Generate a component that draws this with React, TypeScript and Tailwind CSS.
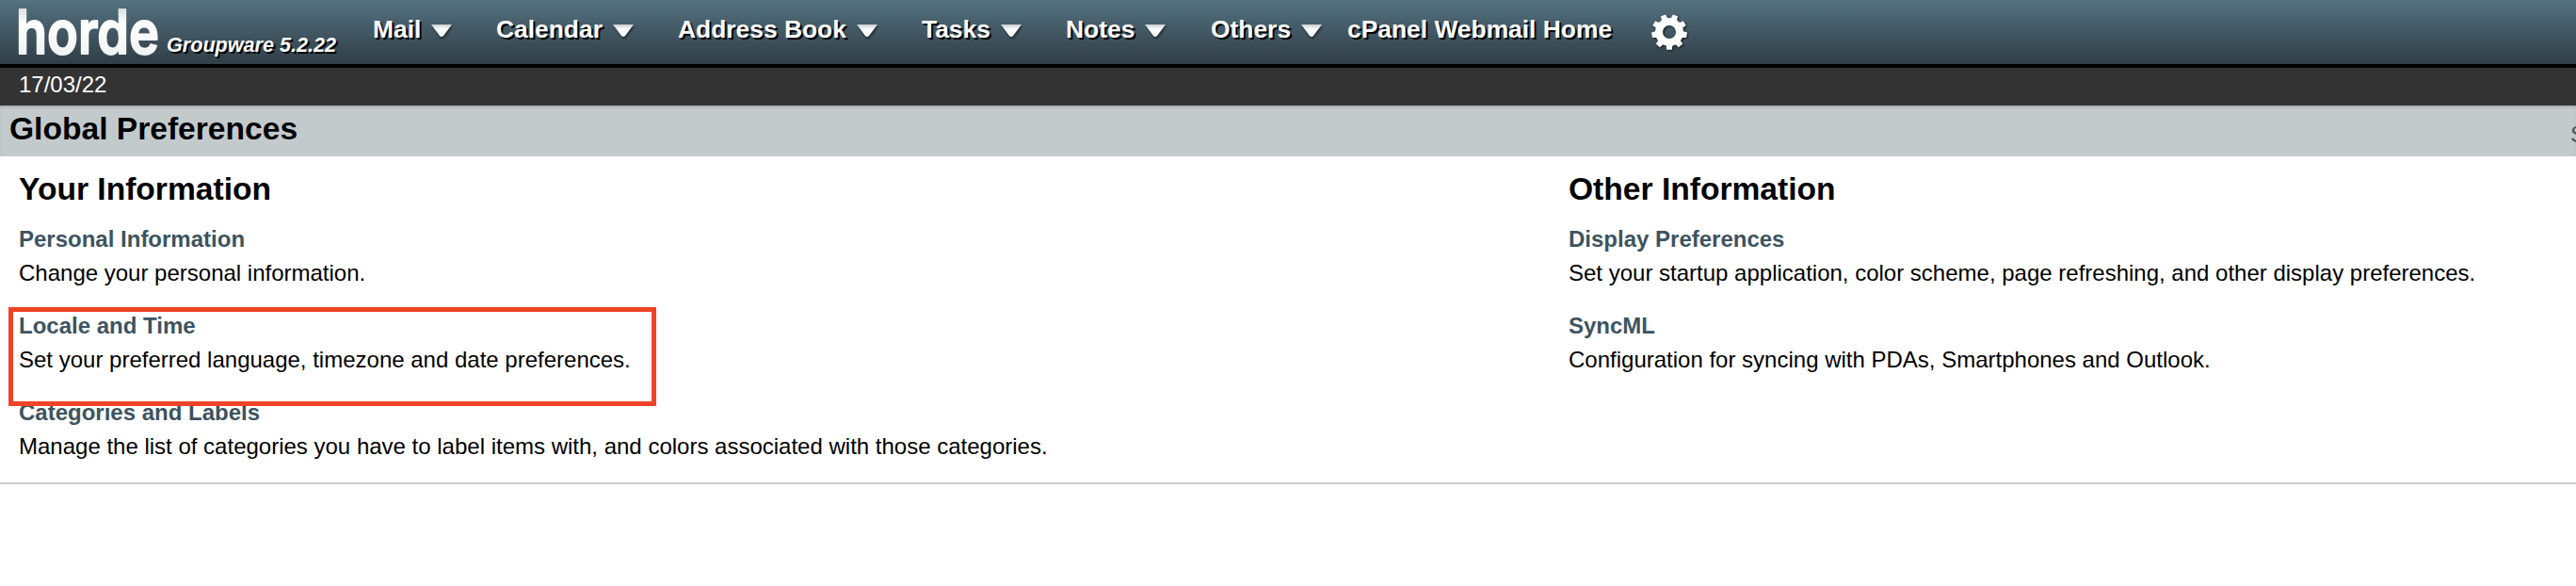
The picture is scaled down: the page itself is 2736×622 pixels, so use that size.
const menu = [
  { label: "Mail", width: "w-[131px]" },
  { label: "Calendar", width: "w-[193px]" },
  { label: "Address Book", width: "w-[259px]" },
  { label: "Tasks", width: "w-[153px]" },
  { label: "Notes", width: "w-[154px]" },
  { label: "Others", width: "w-[145px]" },
];

const yourInfo = [
  { title: "Personal Information", desc: "Change your personal information." },
  { title: "Locale and Time", desc: "Set your preferred language, timezone and date preferences.", marked: true },
  { title: "Categories and Labels", desc: "Manage the list of categories you have to label items with, and colors associated with those categories." },
];

const otherInfo = [
  { title: "Display Preferences", desc: "Set your startup application, color scheme, page refreshing, and other display preferences." },
  { title: "SyncML", desc: "Configuration for syncing with PDAs, Smartphones and Outlook." },
];

type Pref = { title: string; desc: string; marked?: boolean };

function Logo() {
  return (
    <svg width="160" height="68" viewBox="0 0 160 68" className="shrink-0 overflow-visible">
      <defs>
        <linearGradient id="logo" x1="0" y1="8" x2="0" y2="58" gradientUnits="userSpaceOnUse">
          <stop offset="0" stopColor="#d9dddf" />
          <stop offset="0.35" stopColor="#ffffff" />
          <stop offset="1" stopColor="#f1f2f3" />
        </linearGradient>
      </defs>
      <text x="1" y="57" textLength="152" lengthAdjust="spacingAndGlyphs" fontSize="64" fill="url(#logo)" stroke="url(#logo)" strokeWidth="1.8" strokeLinejoin="round" className="font-[family-name:Inter] font-semibold">horde</text>
    </svg>
  );
}

function Arrow() {
  return (
    <svg width="28" height="20" viewBox="0 0 28 20" className="drop-shadow-[1px_2px_1px_rgba(0,0,0,0.5)]">
      <defs>
        <linearGradient id="arrow" x1="0" y1="0" x2="0" y2="1">
          <stop offset="0" stopColor="#c8ced2" />
          <stop offset="0.4" stopColor="#ffffff" />
        </linearGradient>
      </defs>
      <path d="M2 2h22l-9 12q-2 2-4 0z" fill="url(#arrow)" />
    </svg>
  );
}

function Gear() {
  const teeth = [0, 40, 80, 120, 160, 200, 240, 280, 320];
  return (
    <svg width="40" height="40" viewBox="-20 -20 40 40" className="drop-shadow-[1px_1px_1px_rgba(0,0,0,0.7)]">
      <circle r="11" fill="none" stroke="#fff" strokeWidth="8" />
      {teeth.map((a) => (
        <path key={a} d="M-3.6 12h7.2l-0.8 6.8h-5.6z" fill="#fff" transform={`rotate(${a})`} />
      ))}
    </svg>
  );
}

function Section({ title, items }: { title: string; items: Pref[] }) {
  return (
    <section className="w-[1646px] shrink-0 whitespace-nowrap">
      <h2 className="mb-[17px] text-[33.6px] font-bold leading-[36px]">{title}</h2>
      {items.map((p) => (
        <div key={p.title} className="relative h-[92px]">
          <h3 className="font-bold leading-9 text-[#3d5360]">{p.title}</h3>
          <p className="leading-9">{p.desc}</p>
          {p.marked && <div className="absolute -left-[11px] -top-[2px] z-10 h-[105px] w-[688px] border-[5px] border-[#ee4328]" />}
        </div>
      ))}
    </section>
  );
}

export default function App() {
  return (
    <div className="h-[622px] w-full overflow-hidden bg-white font-['Liberation_Sans',Arial,sans-serif] text-[24px] text-black">
      <header className="flex h-[72px] border-b-4 border-black bg-linear-to-b from-[#547280] to-[#303e47] pl-4 text-white">
        <Logo />
        <span className="mt-[34px] w-[220px] whitespace-nowrap pl-px text-[21.6px] font-bold italic leading-[28px] [text-shadow:2px_2px_0_#000]">Groupware 5.2.22</span>
        <nav className="flex whitespace-nowrap pt-[14px] text-[26.4px] font-bold leading-[34px] [text-shadow:2px_2px_0_#000]">
          {menu.map((m) => (
            <div key={m.label} className={`flex gap-[9px] ${m.width}`}>
              {m.label}
              <span className="pt-[10px]"><Arrow /></span>
            </div>
          ))}
          <span className="w-[322px]">cPanel Webmail Home</span>
          <Gear />
        </nav>
      </header>
      <div className="h-10 bg-[#333] pl-5 leading-[35px] text-white">17/03/22</div>
      <div className="flex h-[54px] justify-between overflow-hidden bg-[#c3cacc] pl-[10px] shadow-[inset_0_2px_2px_#a9afb1]">
        <h1 className="text-[33.6px] font-bold leading-[49px]">Global Preferences</h1>
        <span className="w-[6px] whitespace-nowrap pt-[11px] leading-[40px] text-[#3d5360]">Show Advanced Preferences</span>
      </div>
      <main className="flex h-[348px] border-b-2 border-[#ccc] pl-5 pt-[17px]">
        <Section title="Your Information" items={yourInfo} />
        <Section title="Other Information" items={otherInfo} />
      </main>
    </div>
  );
}
